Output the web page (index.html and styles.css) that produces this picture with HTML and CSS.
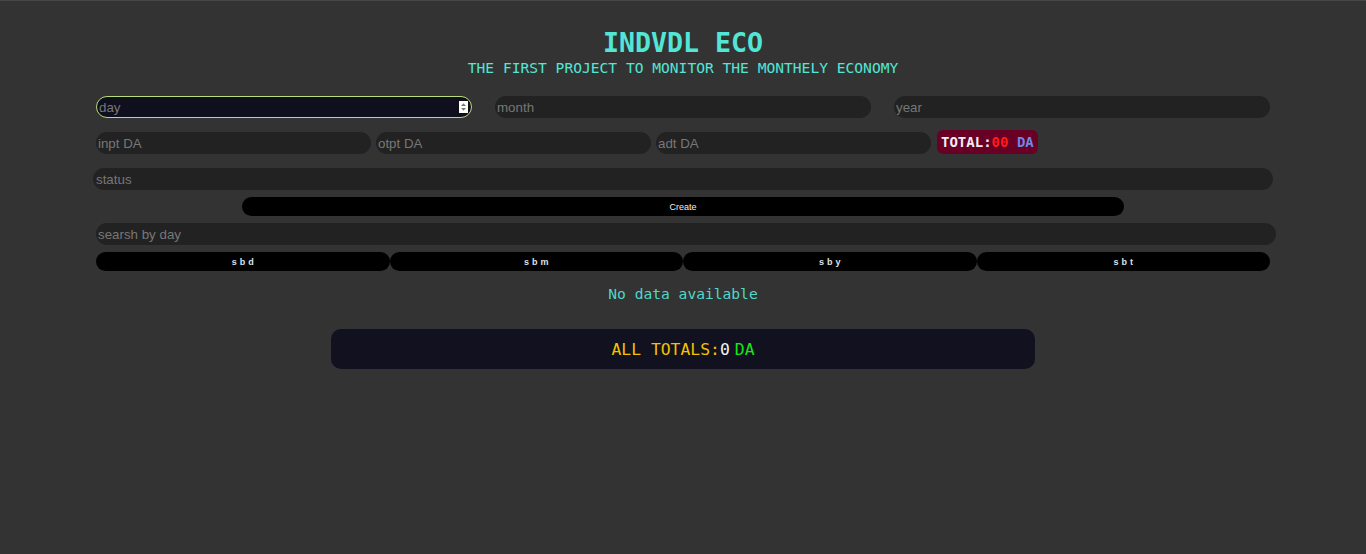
FILE: index.html
```html
<!DOCTYPE html>
<html lang="en">
<head>
<meta charset="utf-8">
<title>INDVDL ECO</title>
<link rel="stylesheet" href="styles.css">
</head>
<body>
<div class="page">
  <header class="head">
    <h1 class="title">INDVDL ECO</h1>
    <p class="subtitle">THE FIRST PROJECT TO MONITOR THE MONTHELY ECONOMY</p>
  </header>

  <div class="row-date">
    <div class="field-wrap">
      <input class="field field-focus" type="text" placeholder="day">
      <span class="spin"><svg width="9" height="12" viewBox="0 0 9 12"><rect width="9" height="12" fill="#fff"/><path d="M2 5 L4.5 2.2 L7 5 Z" fill="#777"/><path d="M2 7 L4.5 9.8 L7 7 Z" fill="#777"/></svg></span>
    </div>
    <input class="field" type="text" placeholder="month">
    <input class="field" type="text" placeholder="year">
  </div>

  <div class="row-money">
    <input class="field field-money" type="text" placeholder="inpt DA">
    <input class="field field-money" type="text" placeholder="otpt DA">
    <input class="field field-money" type="text" placeholder="adt DA">
    <div class="total"><span class="t-label">TOTAL:</span><span class="t-val">00</span> <span class="t-cur">DA</span></div>
  </div>

  <input class="field field-status" type="text" placeholder="status">
  <button class="btn-create" type="button">Create</button>
  <input class="field field-search" type="text" placeholder="searsh by day">

  <div class="row-sort">
    <button class="btn-sort" type="button">sbd</button>
    <button class="btn-sort" type="button">sbm</button>
    <button class="btn-sort" type="button">sby</button>
    <button class="btn-sort" type="button">sbt</button>
  </div>

  <p class="empty">No data available</p>

  <div class="all-totals"><span class="a-label">ALL TOTALS:</span><span class="a-val">0</span><span class="a-cur">DA</span></div>
</div>
</body>
</html>
```

FILE: styles.css
```css
* { box-sizing: border-box; }

html, body {
  margin: 0;
  padding: 0;
  background: #333333;
}

body {
  border-top: 1px solid #474747;
  min-height: 554px;
  font-family: "Liberation Sans", Arial, sans-serif;
}

.page {
  width: 1174px;
  margin: 0 auto;
  padding-top: 27px;
  display: flex;
  flex-direction: column;
}

.head {
  text-align: center;
  font-family: "DejaVu Sans Mono", monospace;
  color: #52e6d6;
}

.title {
  margin: 0;
  font-size: 26.6px;
  line-height: 30px;
  font-weight: bold;
}

.subtitle {
  margin: 1px 0 0;
  font-size: 14.6px;
  line-height: 18px;
  font-weight: normal;
}

.field {
  display: block;
  height: 22px;
  border: none;
  outline: none;
  border-radius: 11px;
  background: #222222;
  color: #ddd;
  padding: 1px 2px;
  font-family: "Liberation Sans", Arial, sans-serif;
  font-size: 13.333px;
}

.field::placeholder { color: #777777; }

.row-date {
  margin-top: 19px;
  display: grid;
  grid-template-columns: repeat(3, 1fr);
  column-gap: 23px;
}

.row-date .field { width: 100%; }

.field-wrap { position: relative; }

.field-focus {
  width: 100%;
  background: #0f0f1e;
  border: 1px solid #b9dc78;
  padding: 0 2px;
}

.spin {
  position: absolute;
  right: 4px;
  top: 5px;
  width: 9px;
  height: 12px;
  display: block;
}
.spin svg { display: block; }

.row-money {
  margin-top: 12px;
  display: flex;
  align-items: flex-end;
  gap: 5px;
}

.field-money { width: 275px; }

.total {
  margin-left: 1px;
  height: 24px;
  padding: 0 4px;
  border-radius: 6px;
  background: #670024;
  font-family: "DejaVu Sans Mono", monospace;
  font-size: 14px;
  font-weight: bold;
  line-height: 24px;
  white-space: pre;
}
.t-label { color: #f4ecf2; }
.t-val { color: #ff1a1a; }
.t-cur { color: #6f86ea; }

.field-status {
  margin-top: 14px;
  margin-left: -3px;
  width: 1180px;
  padding-left: 3px;
}

.btn-create {
  margin: 7px auto 0;
  width: 882px;
  height: 19px;
  border: none;
  border-radius: 10px;
  background: #000;
  color: #f0f0f0;
  font-family: "Liberation Sans", Arial, sans-serif;
  font-size: 9px;
  padding: 0;
  display: block;
}

.field-search {
  margin-top: 7px;
  width: 1180px;
}

.row-sort {
  margin-top: 7px;
  display: grid;
  grid-template-columns: repeat(4, 1fr);
}

.btn-sort {
  height: 19px;
  border: none;
  border-radius: 10px;
  background: #000;
  color: #dde3ea;
  font-family: "Liberation Sans", Arial, sans-serif;
  font-size: 9px;
  font-weight: bold;
  letter-spacing: 3px;
  padding: 0 0 0 3px;
}

.empty {
  margin: 14px 0 0;
  text-align: center;
  font-family: "DejaVu Sans Mono", monospace;
  font-size: 14.6px;
  line-height: 18px;
  color: #4fd8c9;
}

.all-totals {
  margin: 26px auto 0;
  width: 704px;
  height: 40px;
  border-radius: 10px;
  background: #11111f;
  display: flex;
  justify-content: center;
  align-items: center;
  font-family: "DejaVu Sans Mono", monospace;
  font-size: 16.4px;
}
.a-label { color: #f2c200; }
.a-val { color: #f4f4f4; }
.a-cur { color: #19e319; margin-left: 5px; }
```
